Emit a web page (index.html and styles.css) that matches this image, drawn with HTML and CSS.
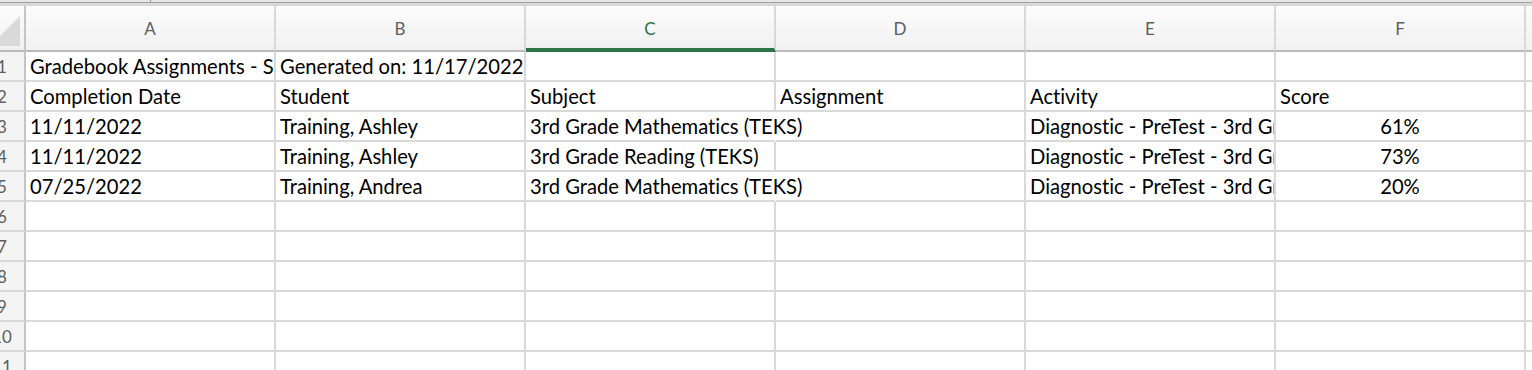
FILE: index.html
```html
<!DOCTYPE html>
<html lang="en">
<head>
<meta charset="utf-8">
<title>Gradebook Assignments</title>
<link rel="stylesheet" href="styles.css">
</head>
<body>
<div class="topbar"><span class="tick"></span></div>
<div class="sheet">
  <div class="corner"><div class="tri"></div></div>
  <div class="colhead">A</div>
  <div class="colhead">B</div>
  <div class="colhead sel">C</div>
  <div class="colhead">D</div>
  <div class="colhead">E</div>
  <div class="colhead">F</div>
  <div class="colhead"></div>

  <div class="rowhead">1</div>
  <div class="cell">Gradebook Assignments - Sample</div>
  <div class="cell">Generated on: 11/17/2022</div>
  <div class="cell"></div><div class="cell"></div><div class="cell"></div><div class="cell"></div><div class="cell"></div>

  <div class="rowhead">2</div>
  <div class="cell">Completion Date</div>
  <div class="cell">Student</div>
  <div class="cell">Subject</div>
  <div class="cell">Assignment</div>
  <div class="cell">Activity</div>
  <div class="cell">Score</div>
  <div class="cell"></div>

  <div class="rowhead">3</div>
  <div class="cell">11/11/2022</div>
  <div class="cell">Training, Ashley</div>
  <div class="cell spill">3rd Grade Mathematics (TEKS)</div>
  <div class="cell"></div>
  <div class="cell">Diagnostic - PreTest - 3rd Grade Mathematics</div>
  <div class="cell num">61%</div>
  <div class="cell"></div>

  <div class="rowhead">4</div>
  <div class="cell">11/11/2022</div>
  <div class="cell">Training, Ashley</div>
  <div class="cell">3rd Grade Reading (TEKS)</div>
  <div class="cell"></div>
  <div class="cell">Diagnostic - PreTest - 3rd Grade Reading</div>
  <div class="cell num">73%</div>
  <div class="cell"></div>

  <div class="rowhead">5</div>
  <div class="cell">07/25/2022</div>
  <div class="cell">Training, Andrea</div>
  <div class="cell spill">3rd Grade Mathematics (TEKS)</div>
  <div class="cell"></div>
  <div class="cell">Diagnostic - PreTest - 3rd Grade Mathematics</div>
  <div class="cell num">20%</div>
  <div class="cell"></div>

  <div class="rowhead">6</div>
  <div class="cell"></div><div class="cell"></div><div class="cell"></div><div class="cell"></div><div class="cell"></div><div class="cell"></div><div class="cell"></div>
  <div class="rowhead">7</div>
  <div class="cell"></div><div class="cell"></div><div class="cell"></div><div class="cell"></div><div class="cell"></div><div class="cell"></div><div class="cell"></div>
  <div class="rowhead">8</div>
  <div class="cell"></div><div class="cell"></div><div class="cell"></div><div class="cell"></div><div class="cell"></div><div class="cell"></div><div class="cell"></div>
  <div class="rowhead">9</div>
  <div class="cell"></div><div class="cell"></div><div class="cell"></div><div class="cell"></div><div class="cell"></div><div class="cell"></div><div class="cell"></div>
  <div class="rowhead">10</div>
  <div class="cell"></div><div class="cell"></div><div class="cell"></div><div class="cell"></div><div class="cell"></div><div class="cell"></div><div class="cell"></div>
  <div class="rowhead">11</div>
  <div class="cell"></div><div class="cell"></div><div class="cell"></div><div class="cell"></div><div class="cell"></div><div class="cell"></div><div class="cell"></div>
  <div class="rowhead">12</div>
  <div class="cell"></div><div class="cell"></div><div class="cell"></div><div class="cell"></div><div class="cell"></div><div class="cell"></div><div class="cell"></div>
</div>
</body>
</html>
```

FILE: styles.css
```css
* { box-sizing: border-box; }

html, body {
  margin: 0;
  padding: 0;
}

body {
  width: 1532px;
  height: 370px;
  overflow: hidden;
  background: #ffffff;
  font-family: Lato, "Open Sans", sans-serif;
  font-variant-ligatures: none;
}

.topbar {
  height: 6px;
  background: linear-gradient(#e6e6e6 0 2px, #a2a2a2 2px 3px, #d8d8d8 3px 6px);
}

.tick {
  display: block;
  margin-left: 150px;
  width: 1px;
  height: 2px;
  background: #9a9a9a;
}

.sheet {
  display: grid;
  grid-template-columns: 46px repeat(6, 250px) 60px;
  grid-template-rows: 46px;
  grid-auto-rows: 30px;
  margin-left: -20px;
}

.corner,
.colhead {
  background: linear-gradient(#fbfbfb, #f1f1f1);
  border-bottom: 2px solid #bababa;
  border-right: 2px solid #d8d8d8;
}

.corner {
  border-right-color: #c4c4c4;
  display: flex;
  justify-content: flex-end;
  align-items: flex-end;
  padding: 0 4px 4px 0;
}

.tri {
  width: 30px;
  height: 30px;
  background: #d9d9d9;
  clip-path: polygon(100% 0, 100% 100%, 0 100%);
}

.colhead {
  display: flex;
  align-items: center;
  justify-content: center;
  color: #5e5e5e;
  font-size: 17px;
}

.colhead.sel {
  color: #2e7446;
  border-bottom: 4px solid #2e7446;
  padding-top: 2px;
}

.rowhead {
  background: #f4f4f4;
  border-right: 2px solid #c4c4c4;
  border-bottom: 2px solid #d8d8d8;
  display: flex;
  align-items: center;
  justify-content: center;
  color: #5e5e5e;
  font-size: 17px;
}

.cell {
  border-right: 2px solid #d9d9d9;
  border-bottom: 2px solid #d9d9d9;
  padding: 0 4px;
  font-size: 20.2px;
  line-height: 28px;
  white-space: nowrap;
  overflow: hidden;
  color: #000000;
}

.cell.spill {
  overflow: visible;
  border-right-color: transparent;
}

.cell.num {
  text-align: center;
}
```
